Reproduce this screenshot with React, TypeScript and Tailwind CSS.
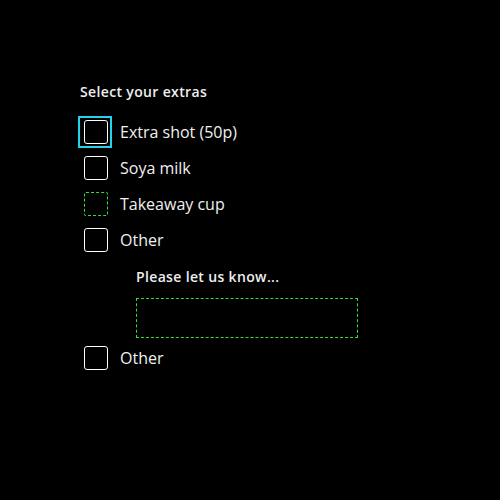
const Box: React.FC<{ dashed?: boolean }> = ({ dashed }) => (
  <span
    className={
      dashed
        ? "block w-6 h-6 shrink-0 rounded-[2px] border border-dashed border-[#33dd33]"
        : "block w-6 h-6 shrink-0 rounded-[3px] border border-white"
    }
  />
);

const Row: React.FC<{ label: string; dashed?: boolean; focused?: boolean }> = ({ label, dashed, focused }) => (
  <label className="flex items-center gap-3 h-6 relative">
    {focused && (
      <span className="absolute left-[-6px] top-[-4px] w-[34px] h-[32px] border-2 border-[#22d3ee]" />
    )}
    <Box dashed={dashed} />
    <span className="text-base leading-6 text-[#f0f0f0]">{label}</span>
  </label>
);

const App = () => {
  return (
    <div
      className="min-h-[500px] w-[500px] bg-black text-white pt-[82px] pl-[84px]"
      style={{ fontFamily: '"Open Sans", "Noto Sans", sans-serif' }}
    >
      <div className="-ml-1 text-sm leading-5 font-semibold tracking-wide text-[#eeeeee]">Select your extras</div>
      <div className="mt-[18px] flex flex-col gap-3">
        <Row label="Extra shot (50p)" focused />
        <Row label="Soya milk" />
        <Row label="Takeaway cup" dashed />
        <Row label="Other" />
      </div>
      <div className="ml-[52px] mt-[15px]">
        <div className="text-sm leading-5 font-semibold tracking-wide text-[#eeeeee]">Please let us know...</div>
        <div className="mt-[11px] w-[222px] h-10 border border-dashed border-[#33dd33]" />
      </div>
      <div className="mt-2">
        <Row label="Other" />
      </div>
    </div>
  );
};

export default App;
